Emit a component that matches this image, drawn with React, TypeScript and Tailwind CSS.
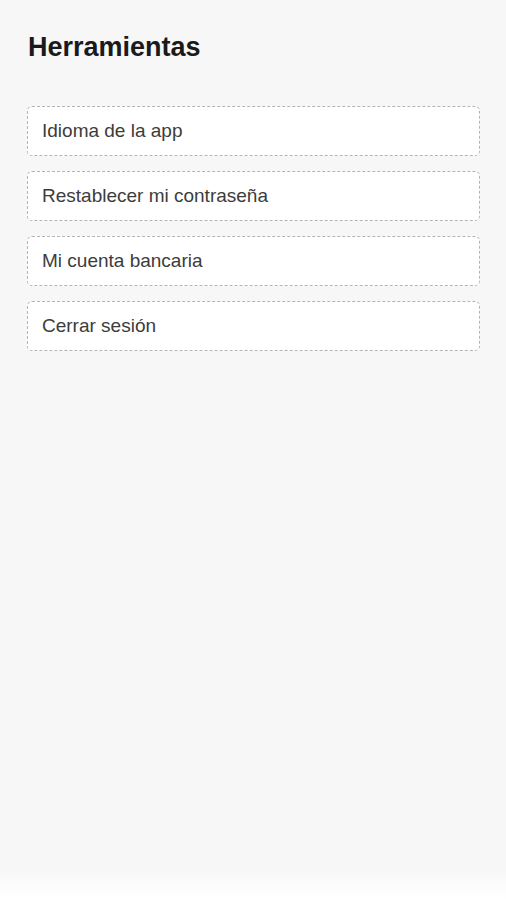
import React from 'react';

const items = ['Idioma de la app', 'Restablecer mi contraseña', 'Mi cuenta bancaria', 'Cerrar sesión'];

const App: React.FC = () => {
  return (
    <div className="min-h-[900px] flex flex-col bg-[#f7f7f7] font-['Liberation_Sans',Arial,sans-serif]">
      <div className="flex-1 pt-[32px] pl-[27px] pr-[26px]">
        <h1 className="pl-px text-[27px] leading-[31px] font-bold text-[#1a1a1a]">Herramientas</h1>

        <div className="mt-[43px] flex flex-col gap-[15px]">
          {items.map((item) => (
            <button
              key={item}
              className="h-[50px] w-full flex items-center px-[14px] bg-white border border-dashed border-[#b4b4b4] rounded-[5px] text-left text-[19px] text-[#3c3c3c]"
            >
              {item}
            </button>
          ))}
        </div>
      </div>
      <div className="h-[32px] bg-gradient-to-b from-[#f7f7f7] to-white" />
    </div>
  );
};

export default App;
